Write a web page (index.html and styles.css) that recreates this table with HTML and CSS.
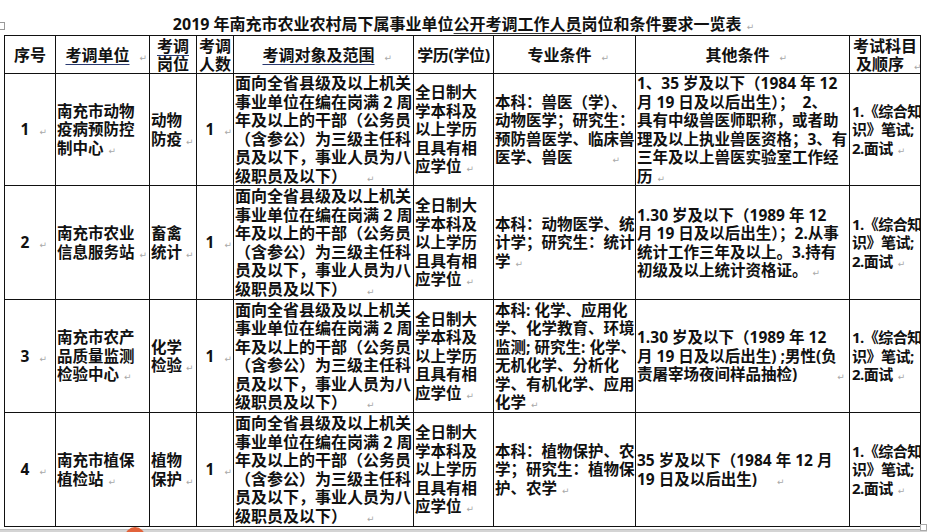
FILE: index.html
```html
<!DOCTYPE html>
<html lang="zh-CN">
<head>
<meta charset="utf-8">
<title>2019年南充市农业农村局下属事业单位公开考调工作人员岗位和条件要求一览表</title>
<link rel="stylesheet" href="styles.css">
</head>
<body>
<div class="page">
  <div class="title"><span class="handle"></span>2019 年南充市农业农村局下属事业单位<span class="ul">公开考调工作人员</span>岗位和条件要求一览表<span class="pm">↵</span></div>
  <table class="grid">
    <colgroup>
      <col class="w1"><col class="w2"><col class="w3"><col class="w4"><col class="w5"><col class="w6"><col class="w7"><col class="w8"><col>
    </colgroup>
    <tr class="head">
      <td class="ctr">序号</td>
      <td class="ctr"><span class="ul">考调单位</span><span class="pm pz">↵</span></td>
      <td class="ctr"><span class="ul">考调</span><br><span class="ul">岗位</span></td>
      <td class="ctr">考调<br>人数</td>
      <td class="ctr c5"><span class="ul">考调对象及范围</span><span class="pm pz">↵</span></td>
      <td class="ctr tight">学历(学位)</td>
      <td class="ctr">专业条件<span class="pm pz">↵</span></td>
      <td class="ctr">其他条件<span class="pm pz">↵</span></td>
      <td class="ctr">考试科目<br>及顺序<span class="pm pz">↵</span></td>
    </tr>
    <tr class="row ra">
      <td class="ctr">1<span class="pm pz">↵</span></td>
      <td>南充市动物<br>疫病预防控<br>制中心<span class="pm">↵</span></td>
      <td>动物<br>防疫<span class="pm pm-s">↵</span></td>
      <td class="ctr">1<span class="pm pz">↵</span></td>
      <td class="c5">面向全省县级及以上机关<br>事业单位在编在岗满 2 周<br>年及以上的干部（公务员<br>（含参公）为三级主任科<br>员及以下，事业人员为八<br>级职员及以下）<span class="pm pm-m">↵</span></td>
      <td>全日制大<br>学本科及<br>以上学历<br>且具有相<br>应学位<span class="pm">↵</span></td>
      <td>本科：兽医（学）、<br>动物医学；研究生：<br>预防兽医学、临床兽<br>医学、兽医<span class="pm pm-f">↵</span></td>
      <td>1、35 岁及以下（1984 年 12<br>月 19 日及以后出生）；&nbsp; 2、<br>具有中级兽医师职称，或者助<br>理及以上执业兽医资格；3、有<br>三年及以上兽医实验室工作经<br>历<span class="pm">↵</span></td>
      <td class="c9">1.《综合知<br>识》笔试;<br>2.面试<span class="pm">↵</span></td>
    </tr>
    <tr class="row rb">
      <td class="ctr">2<span class="pm pz">↵</span></td>
      <td>南充市农业<br>信息服务站<span class="pm">↵</span></td>
      <td>畜禽<br>统计<span class="pm pm-s">↵</span></td>
      <td class="ctr">1<span class="pm pz">↵</span></td>
      <td class="c5">面向全省县级及以上机关<br>事业单位在编在岗满 2 周<br>年及以上的干部（公务员<br>（含参公）为三级主任科<br>员及以下，事业人员为八<br>级职员及以下）<span class="pm pm-m">↵</span></td>
      <td>全日制大<br>学本科及<br>以上学历<br>且具有相<br>应学位<span class="pm">↵</span></td>
      <td>本科：动物医学、统<br>计学；研究生：统计<br>学<span class="pm">↵</span></td>
      <td>1.30 岁及以下（1989 年 12<br>月 19 日及以后出生）；2.从事<br>统计工作三年及以上。3.持有<br>初级及以上统计资格证。<span class="pm">↵</span></td>
      <td class="c9">1.《综合知<br>识》笔试;<br>2.面试<span class="pm">↵</span></td>
    </tr>
    <tr class="row rc">
      <td class="ctr">3<span class="pm pz">↵</span></td>
      <td>南充市农产<br>品质量监测<br>检验中心<span class="pm">↵</span></td>
      <td>化学<br>检验<span class="pm pm-s">↵</span></td>
      <td class="ctr">1<span class="pm pz">↵</span></td>
      <td class="c5">面向全省县级及以上机关<br>事业单位在编在岗满 2 周<br>年及以上的干部（公务员<br>（含参公）为三级主任科<br>员及以下，事业人员为八<br>级职员及以下）<span class="pm pm-m">↵</span></td>
      <td>全日制大<br>学本科及<br>以上学历<br>且具有相<br>应学位<span class="pm">↵</span></td>
      <td>本科: 化学、应用化<br>学、化学教育、环境<br>监测; 研究生: 化学、<br>无机化学、分析化<br>学、有机化学、应用<br>化学<span class="pm">↵</span></td>
      <td>1.30 岁及以下（1989 年 12<br>月 19 日及以后出生) ;男性(负<br>责屠宰场夜间样品抽检)<span class="pm pm-f">↵</span></td>
      <td class="c9">1.《综合知<br>识》笔试;<br>2.面试<span class="pm">↵</span></td>
    </tr>
    <tr class="row rd">
      <td class="ctr">4<span class="pm pz">↵</span></td>
      <td>南充市植保<br>植检站<span class="pm">↵</span></td>
      <td>植物<br>保护<span class="pm pm-s">↵</span></td>
      <td class="ctr">1<span class="pm pz">↵</span></td>
      <td class="c5">面向全省县级及以上机关<br>事业单位在编在岗满 2 周<br>年及以上的干部（公务员<br>（含参公）为三级主任科<br>员及以下，事业人员为八<br>级职员及以下）<span class="pm pm-m">↵</span></td>
      <td>全日制大<br>学本科及<br>以上学历<br>且具有相<br>应学位<span class="pm">↵</span></td>
      <td>本科：植物保护、农<br>学；研究生：植物保<br>护、农学<span class="pm">↵</span></td>
      <td>35 岁及以下（1984 年 12 月<br>19 日及以后出生)<span class="pm pm-m">↵</span></td>
      <td class="c9">1.《综合知<br>识》笔试;<br>2.面试<span class="pm">↵</span></td>
    </tr>
  </table>
  <div class="foot"><span class="blob"></span><span class="corner"></span></div>
</div>
</body>
</html>
```
FILE: styles.css
```css
html, body {
  margin: 0;
  padding: 0;
  background: #ffffff;
}
.page {
  width: 927px;
  height: 532px;
  overflow: hidden;
  position: relative;
  font-family: "Open Sans", "Noto Sans CJK SC", sans-serif;
  color: #111;
}
.title {
  box-sizing: border-box;
  height: 35px;
  padding-top: 15px;
  line-height: 19px;
  font-size: 16px;
  font-weight: 700;
  text-align: center;
  white-space: nowrap;
  position: relative;
}
.handle {
  position: absolute;
  left: -3px;
  top: 22px;
  width: 6px;
  height: 6px;
  border: 1px solid #999;
}
.ul {
  text-decoration: underline;
  text-decoration-color: #2a3a70;
  text-decoration-thickness: 1px;
  text-underline-offset: 3px;
}
.title .ul {
  text-decoration-color: #333;
}
.pm {
  font-family: "DejaVu Sans", sans-serif;
  font-weight: 400;
  font-size: 9px;
  line-height: 0;
  color: #a8a8a8;
  margin-left: 5px;
}
.pz {
  display: inline-block;
  width: 0;
  margin-left: 10px;
}
.pm-s { margin-left: 4px; }
.pm-m { margin-left: 20px; }
.pm-f { margin-left: 40px; }
.grid {
  margin-left: 4px;
  width: 917px;
  table-layout: fixed;
  border-collapse: collapse;
}
.w1 { width: 51px; }
.w2 { width: 94px; }
.w3 { width: 47px; }
.w4 { width: 37px; }
.w5 { width: 180px; }
.w6 { width: 80px; }
.w7 { width: 142px; }
.w8 { width: 214px; }
.grid td {
  border: 1px solid #111;
  padding: 0 0 0 1px;
  vertical-align: middle;
  text-align: left;
  white-space: nowrap;
  overflow: hidden;
  font-size: 15.5px;
  line-height: 18.5px;
  font-weight: 700;
}
.grid td.ctr {
  text-align: center;
  padding: 0;
}
.grid td.c5 { font-size: 16px; }
.grid td.c9 {
  font-size: 15px;
  letter-spacing: -0.5px;
  padding-left: 2px;
}
.grid td.tight {
  letter-spacing: -0.4px;
}
.head td { height: 37px; line-height: 18px; font-size: 16px; }
.ra td { height: 111px; }
.rb td { height: 113px; }
.rc td { height: 112px; }
.rd td { height: 113px; }
.foot {
  position: relative;
  margin-top: 2px;
  height: 3px;
  background: #d4d4d4;
  border-top: 1px solid #bdbdbd;
}
.blob {
  position: absolute;
  left: 125px;
  top: -3px;
  width: 20px;
  height: 10px;
  border-radius: 10px 10px 0 0;
  background: #e2633b;
}
.corner {
  position: absolute;
  right: 0;
  top: -6px;
  width: 5px;
  height: 5px;
  border: 1px solid #aaa;
  background: #fff;
}
```
